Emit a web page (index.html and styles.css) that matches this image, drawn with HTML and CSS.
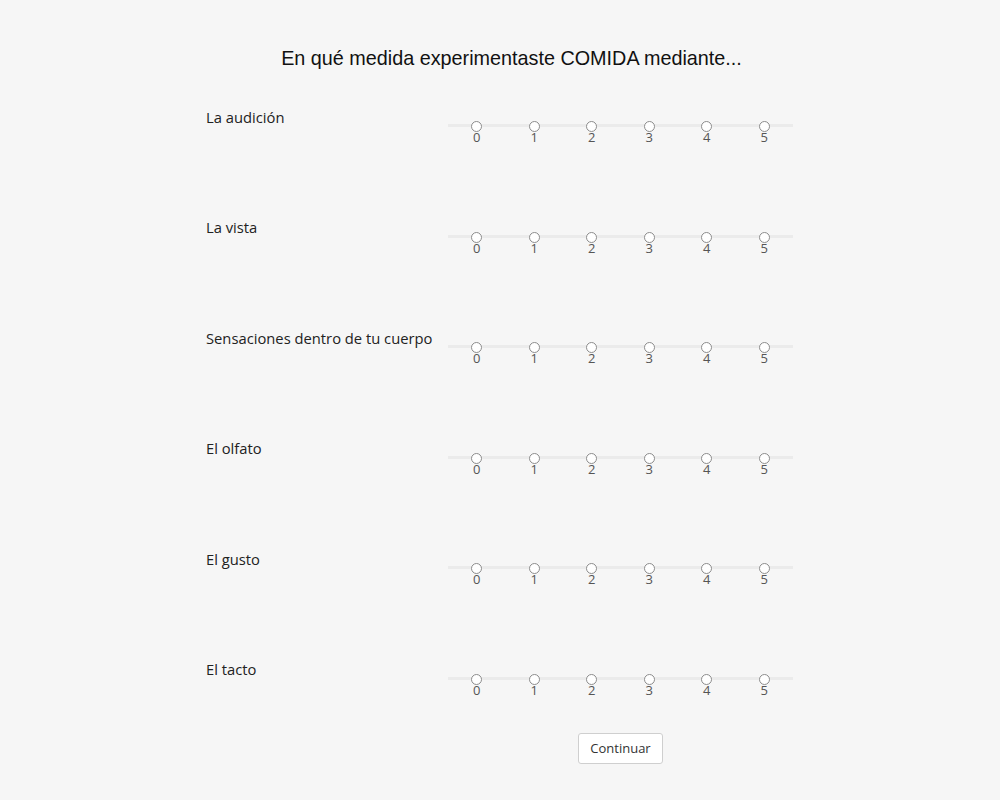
FILE: index.html
```html
<!DOCTYPE html>
<html lang="es">
<head>
<meta charset="utf-8">
<title>Encuesta</title>
<link rel="stylesheet" href="styles.css">
</head>
<body>
<h1 class="title">En qué medida experimentaste COMIDA mediante...</h1>
<main class="form">
  <div class="row">
    <div class="label">La audición</div>
    <div class="scale">
      <label class="point"><span class="radio"></span><span class="num">0</span></label>
      <label class="point"><span class="radio"></span><span class="num">1</span></label>
      <label class="point"><span class="radio"></span><span class="num">2</span></label>
      <label class="point"><span class="radio"></span><span class="num">3</span></label>
      <label class="point"><span class="radio"></span><span class="num">4</span></label>
      <label class="point"><span class="radio"></span><span class="num">5</span></label>
    </div>
  </div>
  <div class="row">
    <div class="label">La vista</div>
    <div class="scale">
      <label class="point"><span class="radio"></span><span class="num">0</span></label>
      <label class="point"><span class="radio"></span><span class="num">1</span></label>
      <label class="point"><span class="radio"></span><span class="num">2</span></label>
      <label class="point"><span class="radio"></span><span class="num">3</span></label>
      <label class="point"><span class="radio"></span><span class="num">4</span></label>
      <label class="point"><span class="radio"></span><span class="num">5</span></label>
    </div>
  </div>
  <div class="row">
    <div class="label">Sensaciones dentro de tu cuerpo</div>
    <div class="scale">
      <label class="point"><span class="radio"></span><span class="num">0</span></label>
      <label class="point"><span class="radio"></span><span class="num">1</span></label>
      <label class="point"><span class="radio"></span><span class="num">2</span></label>
      <label class="point"><span class="radio"></span><span class="num">3</span></label>
      <label class="point"><span class="radio"></span><span class="num">4</span></label>
      <label class="point"><span class="radio"></span><span class="num">5</span></label>
    </div>
  </div>
  <div class="row">
    <div class="label">El olfato</div>
    <div class="scale">
      <label class="point"><span class="radio"></span><span class="num">0</span></label>
      <label class="point"><span class="radio"></span><span class="num">1</span></label>
      <label class="point"><span class="radio"></span><span class="num">2</span></label>
      <label class="point"><span class="radio"></span><span class="num">3</span></label>
      <label class="point"><span class="radio"></span><span class="num">4</span></label>
      <label class="point"><span class="radio"></span><span class="num">5</span></label>
    </div>
  </div>
  <div class="row">
    <div class="label">El gusto</div>
    <div class="scale">
      <label class="point"><span class="radio"></span><span class="num">0</span></label>
      <label class="point"><span class="radio"></span><span class="num">1</span></label>
      <label class="point"><span class="radio"></span><span class="num">2</span></label>
      <label class="point"><span class="radio"></span><span class="num">3</span></label>
      <label class="point"><span class="radio"></span><span class="num">4</span></label>
      <label class="point"><span class="radio"></span><span class="num">5</span></label>
    </div>
  </div>
  <div class="row">
    <div class="label">El tacto</div>
    <div class="scale">
      <label class="point"><span class="radio"></span><span class="num">0</span></label>
      <label class="point"><span class="radio"></span><span class="num">1</span></label>
      <label class="point"><span class="radio"></span><span class="num">2</span></label>
      <label class="point"><span class="radio"></span><span class="num">3</span></label>
      <label class="point"><span class="radio"></span><span class="num">4</span></label>
      <label class="point"><span class="radio"></span><span class="num">5</span></label>
    </div>
  </div>
  <div class="actions">
    <div class="spacer"></div>
    <div class="btn-wrap"><button class="btn" type="button">Continuar</button></div>
  </div>
</main>
</body>
</html>
```
FILE: styles.css
```css
html, body {
  margin: 0;
  padding: 0;
  background: #f6f6f6;
}

body {
  font-family: "Open Sans", "DejaVu Sans", sans-serif;
  color: #333;
}

.title {
  margin: 0;
  padding: 47px 0 0 23px;
  font-family: "Liberation Sans", Arial, sans-serif;
  font-weight: normal;
  font-size: 19.8px;
  line-height: 23px;
  color: #111;
  text-align: center;
}

.form {
  width: 588px;
  margin: 35px auto 0;
  display: flex;
  flex-direction: column;
}

.row {
  display: flex;
  align-items: flex-start;
}

.row + .row {
  margin-top: 71.6px;
}

.label {
  width: 242px;
  flex: none;
  padding-top: 1.5px;
  font-size: 14.75px;
  line-height: 20px;
  color: #222;
}

.scale {
  width: 345px;
  flex: none;
  display: flex;
  margin-top: 16px;
  background: linear-gradient(#ebebeb, #ebebeb) 0 3px / 100% 3px no-repeat;
}

.point {
  flex: 1 1 0;
  display: flex;
  flex-direction: column;
  align-items: center;
}

.radio {
  width: 11px;
  height: 11px;
  box-sizing: border-box;
  border: 1px solid #8c8c8c;
  border-radius: 50%;
  background: #fff;
}

.num {
  margin-top: -2px;
  font-size: 13px;
  line-height: 14px;
  color: #555;
}

.actions {
  display: flex;
  margin-top: 36px;
}

.spacer {
  width: 242px;
  flex: none;
}

.btn-wrap {
  width: 345px;
  flex: none;
  display: flex;
  justify-content: center;
}

.btn {
  width: 85px;
  height: 31px;
  padding: 0;
  background: #fff;
  border: 1px solid #cfcfcf;
  border-radius: 3px;
  font-family: "Open Sans", "DejaVu Sans", sans-serif;
  font-size: 13px;
  color: #333;
}
```
